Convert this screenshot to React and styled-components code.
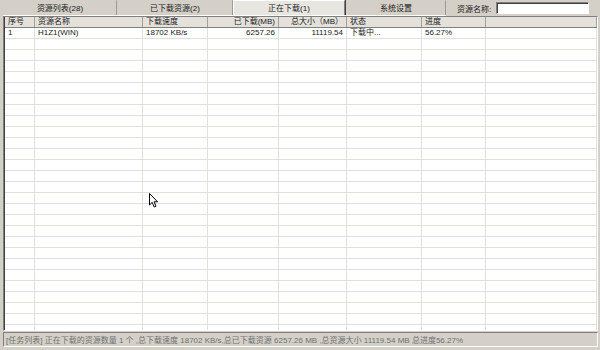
import React from "react";
import styled, { createGlobalStyle } from "styled-components";

const Global = createGlobalStyle`
  html, body { margin: 0; padding: 0; background: #d4d0c8; }
  body { font-family: "Liberation Sans", "Noto Sans CJK SC", sans-serif; font-size: 8px; color: #111; }
`;

const Window = styled.div`
  position: relative;
  width: 600px;
  height: 350px;
  background: #d4d0c8;
  display: flex;
  flex-direction: column;
  overflow: hidden;
`;

const TopBar = styled.div`
  display: flex;
  align-items: stretch;
  height: 16px;
  padding: 0 0 0 3px;
`;

const Tabs = styled.div`
  display: flex;
  width: 443px;
  border-bottom: 1px solid #fff;
`;

const Tab = styled.div`
  width: ${(p) => p.w}px;
  box-sizing: border-box;
  display: flex;
  align-items: center;
  justify-content: center;
  font-size: 8px;
  line-height: 1;
  color: #222;
  border-right: 1px solid ${(p) => (p.active ? "#808080" : "#9a9a9a")};
  border-left: 1px solid ${(p) => (p.active ? "#fff" : "transparent")};
  border-top: 1px solid ${(p) => (p.active ? "#fff" : "transparent")};
  background: ${(p) => (p.active ? "#e8e6e0" : "#d4d0c8")};
  box-shadow: ${(p) => (p.active ? "1px 0 0 #404040" : "none")};
  margin-right: ${(p) => (p.active ? "1px" : "0")};
  padding-top: 1px;
`;

const Search = styled.div`
  display: flex;
  align-items: center;
  gap: 5px;
  margin-left: 11px;
`;

const SearchLabel = styled.span`
  font-size: 8px;
  color: #222;
`;

const SearchInput = styled.div`
  width: 93px;
  height: 12px;
  box-sizing: border-box;
  background: #fff;
  border-top: 1px solid #808080;
  border-left: 1px solid #808080;
  border-bottom: 1px solid #fff;
  border-right: 1px solid #fff;
  box-shadow: inset 1px 1px 0 #404040;
`;

const Grid = styled.div`
  margin: 0 2px 0 3px;
  height: 315px;
  box-sizing: border-box;
  background: #fff;
  border-left: 1px solid #808080;
  border-top: 1px solid #808080;
  border-right: 1px solid #fff;
  border-bottom: 1px solid #fff;
  box-shadow: inset 1px 1px 0 #404040;
  overflow: hidden;
  padding: 0 0 0 1px;
`;

const Row = styled.div`
  display: flex;
  height: 11px;
  box-sizing: border-box;
  border-bottom: 1px solid ${(p) => (p.header ? "#808080" : "#e2e0dc")};
  background: ${(p) => (p.header ? "#e4e1da" : "#fff")};
`;

const Cell = styled.div`
  width: ${(p) => p.w}px;
  flex: ${(p) => (p.w ? "none" : "1")};
  box-sizing: border-box;
  padding: 0 3px;
  border-right: 1px solid ${(p) => (p.header ? "#a0a0a0" : "#e2e0dc")};
  font-size: 8px;
  line-height: 10px;
  white-space: nowrap;
  overflow: hidden;
  text-align: ${(p) => (p.right ? "right" : "left")};
  color: #1a1a1a;
`;

const StatusBar = styled.div`
  margin: 1px 2px 0 3px;
  height: 15px;
  box-sizing: border-box;
  border-top: 1px solid #808080;
  border-left: 1px solid #808080;
  border-bottom: 1px solid #fff;
  border-right: 1px solid #fff;
  display: flex;
  align-items: center;
  padding-left: 2px;
  font-size: 8px;
  color: #707070;
  white-space: nowrap;
`;

const Cursor = styled.svg`
  position: absolute;
  left: 149px;
  top: 193px;
`;

const cols = [
  { w: 30, label: "序号" },
  { w: 108, label: "资源名称" },
  { w: 65, label: "下载速度" },
  { w: 71, label: "已下载(MB)", right: true },
  { w: 68, label: "总大小（MB）", right: true },
  { w: 75, label: "状态" },
  { w: 64, label: "进度" },
  { w: 0, label: "" },
];

const data = [["1", "H1Z1(WIN)", "18702 KB/s", "6257.26", "11119.54", "下载中...", "56.27%", ""]];

export default function App() {
  const rows = [];
  for (let i = 0; i < 28; i++) rows.push(data[i] || cols.map(() => ""));
  return (
    <Window>
      <Global />
      <TopBar>
        <Tabs>
          <Tab w={114}>资源列表(28)</Tab>
          <Tab w={116}>已下载资源(2)</Tab>
          <Tab w={112} active>正在下载(1)</Tab>
          <Tab w={100}>系统设置</Tab>
        </Tabs>
        <Search>
          <SearchLabel>资源名称:</SearchLabel>
          <SearchInput />
        </Search>
      </TopBar>
      <Grid>
        <Row header>
          {cols.map((c, i) => (
            <Cell key={i} w={c.w} right={c.right} header>
              {c.label}
            </Cell>
          ))}
        </Row>
        {rows.map((r, ri) => (
          <Row key={ri}>
            {cols.map((c, i) => (
              <Cell key={i} w={c.w} right={c.right}>
                {r[i]}
              </Cell>
            ))}
          </Row>
        ))}
      </Grid>
      <StatusBar>
        [任务列表] 正在下载的资源数量 1 个 ,总下载速度 18702 KB/s,总已下载资源 6257.26 MB ,总资源大小 11119.54 MB 总进度56.27%
      </StatusBar>
      <Cursor width="10" height="16" viewBox="0 0 10 16">
        <path d="M0.5 0.5 L0.5 12 L3.2 9.4 L5.2 14 L7 13.2 L5 8.8 L8.6 8.8 Z" fill="#fff" stroke="#000" strokeWidth="1" />
      </Cursor>
    </Window>
  );
}
